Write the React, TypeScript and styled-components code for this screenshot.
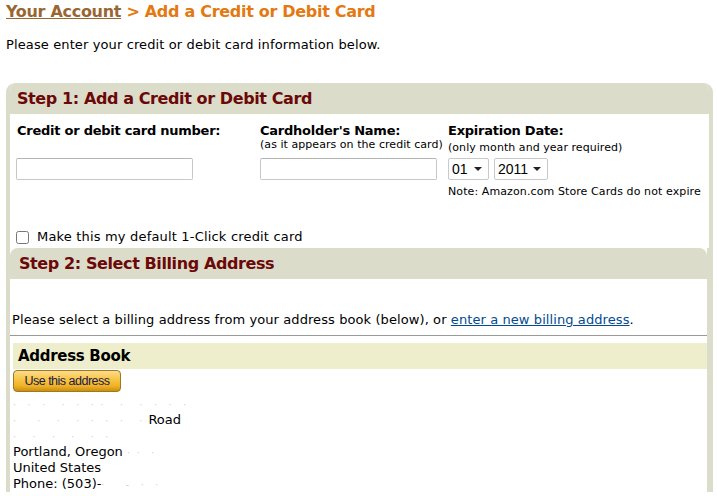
import styled, { createGlobalStyle } from 'styled-components';

const GlobalStyle = createGlobalStyle`
  html, body {
    margin: 0;
    padding: 0;
    background: #fff;
  }
  body {
    font-family: 'DejaVu Sans', Verdana, sans-serif;
    color: #000;
  }
`;

const TAN = '#dcdccb';

const addressLines = [
  { blur: '·  ·  ·   ·  ·  · ·   ·   ·  ·  ·  ·', text: '' },
  { blur: '·    ·   ·   ·  ·  ·  ·   ·', text: ' Road' },
  { blur: '·   ·   ·   ·   ·  ·', text: '' },
  { blur: '', text: 'Portland, Oregon ', tail: '· ·  ·' },
  { blur: '', text: 'United States' },
  { blur: '', text: 'Phone: (503)-', tail: '·    -  ·  ·' },
];

const months = ['01', '02', '03', '04', '05', '06', '07', '08', '09', '10', '11', '12'];
const years = ['2011', '2012', '2013', '2014', '2015', '2016', '2017', '2018'];

const App = () => {
  return (
    <Page>
      <GlobalStyle />
      <Title>
        <AccountLink href="#">Your Account</AccountLink>
        <Crumb> &gt; Add a Credit or Debit Card</Crumb>
      </Title>
      <Intro>Please enter your credit or debit card information below.</Intro>

      <OuterBox>
        <StepHeader>
          <StepTitle>Step 1: Add a Credit or Debit Card</StepTitle>
        </StepHeader>
        <CardBody>
          <FieldGrid>
            <Field>
              <LabelBlock>
                <Label>Credit or debit card number:</Label>
              </LabelBlock>
              <TextInput $width={177} $shift={-1} />
            </Field>
            <Field>
              <LabelBlock>
                <Label>Cardholder's Name:</Label>
                <SubLabel>(as it appears on the credit card)</SubLabel>
              </LabelBlock>
              <TextInput $width={177} $shift={0} />
            </Field>
            <Field>
              <LabelBlock>
                <Label>Expiration Date:</Label>
                <SubLabel $offset={3}>(only month and year required)</SubLabel>
              </LabelBlock>
              <SelectRow>
                <SelectWrap $width={41}>
                  <Select defaultValue="01">
                    {months.map(m => (
                      <option key={m}>{m}</option>
                    ))}
                  </Select>
                </SelectWrap>
                <SelectWrap $width={54}>
                  <Select defaultValue="2011">
                    {years.map(y => (
                      <option key={y}>{y}</option>
                    ))}
                  </Select>
                </SelectWrap>
              </SelectRow>
              <Note>Note: Amazon.com Store Cards do not expire</Note>
            </Field>
          </FieldGrid>
          <CheckRow>
            <CheckBox type="checkbox" />
            <span>Make this my default 1-Click credit card</span>
          </CheckRow>
        </CardBody>

        <InnerBox>
          <StepHeader $inner>
            <StepTitle>Step 2: Select Billing Address</StepTitle>
          </StepHeader>
          <BillingBody>
            <BillingText>
              Please select a billing address from your address book (below), or{' '}
              <BlueLink href="#">enter a new billing address</BlueLink>.
            </BillingText>
            <Rule />
            <BookBar>Address Book</BookBar>
            <UseButton type="button">Use this address</UseButton>
            <Address>
              {addressLines.map((line, i) => (
                <AddressLine key={i}>
                  {line.blur && <Blur>{line.blur}</Blur>}
                  {line.text}
                  {line.tail && <Blur>{line.tail}</Blur>}
                </AddressLine>
              ))}
            </Address>
          </BillingBody>
        </InnerBox>
      </OuterBox>
    </Page>
  );
};

const Page = styled.div`
  padding: 0 4px 0 6px;
  height: 496px;
  overflow: hidden;
  box-sizing: border-box;
`;

const Title = styled.h1`
  margin: 0;
  padding-top: 1px;
  font-size: 16px;
  line-height: 22px;
  font-weight: bold;
  letter-spacing: -0.3px;
  white-space: nowrap;
`;

const AccountLink = styled.a`
  color: #996633;
  text-decoration: underline;
`;

const Crumb = styled.span`
  color: #e47911;
`;

const Intro = styled.p`
  margin: 14px 0 0;
  font-size: 13px;
  line-height: 16px;
  letter-spacing: 0.12px;
`;

const OuterBox = styled.div`
  margin-top: 30px;
  border-left: 4px solid ${TAN};
  border-right: 4px solid ${TAN};
  border-top-left-radius: 9px;
  border-top-right-radius: 9px;
  overflow: hidden;
  background: #fff;
`;

const StepHeader = styled.div<{ $inner?: boolean }>`
  background: ${TAN};
  height: 31px;
  display: flex;
  align-items: center;
  padding-left: ${p => (p.$inner ? 9 : 7)}px;
  border-top-left-radius: ${p => (p.$inner ? 8 : 0)}px;
  border-top-right-radius: ${p => (p.$inner ? 8 : 0)}px;
`;

const StepTitle = styled.h2`
  margin: 0;
  font-size: 16px;
  font-weight: bold;
  letter-spacing: -0.4px;
  color: #6b0808;
  white-space: nowrap;
`;

const CardBody = styled.div`
  padding: 9px 0 0 7px;
`;

const FieldGrid = styled.div`
  display: grid;
  grid-template-columns: 243px 188px 1fr;
`;

const Field = styled.div`
  display: flex;
  flex-direction: column;
`;

const LabelBlock = styled.div`
  height: 35px;
`;

const Label = styled.div`
  font-size: 13px;
  font-weight: bold;
  line-height: 16px;
  letter-spacing: -0.25px;
  white-space: nowrap;
`;

const SubLabel = styled.div<{ $offset?: number }>`
  font-size: 11px;
  line-height: 12px;
  letter-spacing: 0.05px;
  margin-top: ${p => p.$offset ?? 0}px;
  white-space: nowrap;
`;

const TextInput = styled.input<{ $width: number; $shift: number }>`
  width: ${p => p.$width}px;
  height: 22px;
  box-sizing: border-box;
  margin: 0 0 0 ${p => p.$shift}px;
  border: 1px solid #c9c9c9;
  border-top-color: #b4b4b4;
  border-radius: 2px;
  background: #fff;
  font-size: 13px;
  padding: 2px 4px;
`;

const SelectRow = styled.div`
  display: flex;
  gap: 5px;
`;

const SelectWrap = styled.div<{ $width: number }>`
  position: relative;
  width: ${p => p.$width}px;
  height: 22px;

  &::after {
    content: '';
    position: absolute;
    right: 7px;
    top: 9px;
    border-left: 4px solid transparent;
    border-right: 4px solid transparent;
    border-top: 4px solid #222;
    pointer-events: none;
  }
`;

const Select = styled.select`
  appearance: none;
  -webkit-appearance: none;
  width: 100%;
  height: 100%;
  box-sizing: border-box;
  margin: 0;
  padding: 0 0 0 3px;
  border: 1px solid #c9c9c9;
  border-radius: 2px;
  background: #fff;
  font-family: 'Liberation Sans', Arial, sans-serif;
  font-size: 14px;
  color: #000;
`;

const Note = styled.div`
  margin-top: 6px;
  font-size: 11px;
  line-height: 12px;
  letter-spacing: 0.1px;
  white-space: nowrap;
`;

const CheckRow = styled.label`
  display: flex;
  align-items: center;
  gap: 8px;
  margin-top: 32px;
  height: 14px;
  font-size: 13px;
  line-height: 16px;
  letter-spacing: 0.18px;
`;

const CheckBox = styled.input`
  width: 13px;
  height: 13px;
  margin: 0 0 0 -1px;
  accent-color: #888;
`;

const InnerBox = styled.div`
  margin-top: 4px;
  border-right: 2px solid ${TAN};
  background: #fff;
`;

const BillingBody = styled.div`
  padding: 33px 0 0 2px;
`;

const BillingText = styled.div`
  font-size: 13px;
  line-height: 16px;
  letter-spacing: 0.09px;
  white-space: nowrap;
`;

const BlueLink = styled.a`
  color: #004b91;
  text-decoration: underline;
`;

const Rule = styled.div`
  height: 1px;
  background: #999;
  margin: 7px 0 0 -2px;
`;

const BookBar = styled.div`
  margin: 7px 0 0 1px;
  height: 26px;
  display: flex;
  align-items: center;
  padding-left: 5px;
  background: #eeeecd;
  font-size: 15px;
  font-weight: bold;
  letter-spacing: -0.3px;
`;

const UseButton = styled.button`
  display: block;
  margin: 1px 0 0 1px;
  width: 108px;
  height: 22px;
  padding: 0 0 1px;
  border: 1px solid #9c7a24;
  border-radius: 4px;
  background: linear-gradient(to bottom, #fbdb8e 0%, #f7c747 40%, #f0b224 75%, #c98e12 100%);
  font-family: 'Liberation Sans', Arial, sans-serif;
  font-size: 12.5px;
  letter-spacing: -0.5px;
  color: #19194f;
  cursor: pointer;
`;

const Address = styled.div`
  margin: 4px 0 0 1px;
  font-size: 13px;
  line-height: 16px;
`;

const AddressLine = styled.div`
  height: 16px;
  white-space: pre;
`;

const Blur = styled.span`
  color: #c8c8c8;
  font-size: 9px;
  letter-spacing: 2px;
`;

export default App;
